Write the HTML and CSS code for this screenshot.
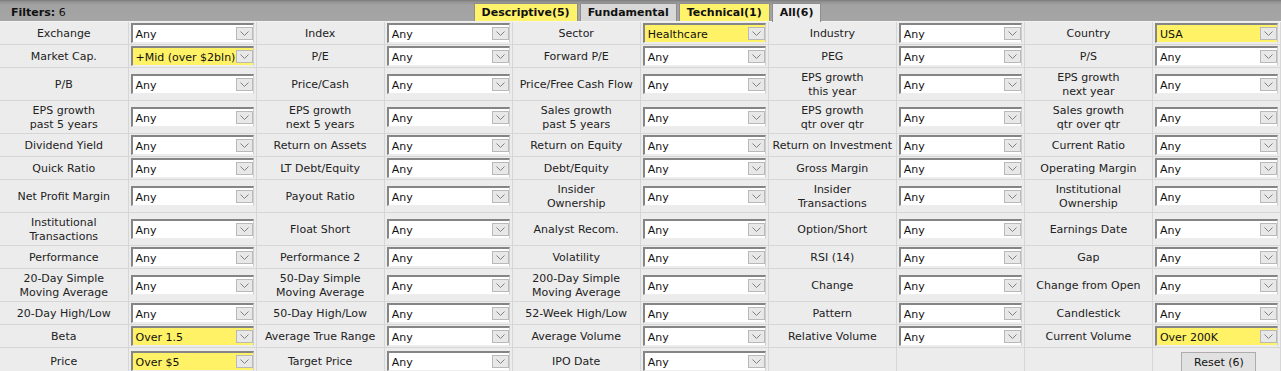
FILE: index.html
```html
<!DOCTYPE html>
<html>
<head>
<meta charset="utf-8">
<link rel="stylesheet" href="styles.css">
</head>
<body>
<div class="bar">
  <div class="title"><b>Filters:</b> 6</div>
  <div class="tabs">
    <span class="tab on">Descriptive(5)</span>
    <span class="tab">Fundamental</span>
    <span class="tab on">Technical(1)</span>
    <span class="tab cur">All(6)</span>
  </div>
  <div></div>
</div>
<table class="grid">
<colgroup><col><col><col><col><col><col><col><col><col><col></colgroup>
<tr>
  <td class="lb">Exchange</td><td class="sc"><div class="sel">Any<i class="arr"></i></div></td>
  <td class="lb">Index</td><td class="sc"><div class="sel">Any<i class="arr"></i></div></td>
  <td class="lb">Sector</td><td class="sc"><div class="sel hl">Healthcare<i class="arr"></i></div></td>
  <td class="lb">Industry</td><td class="sc"><div class="sel">Any<i class="arr"></i></div></td>
  <td class="lb">Country</td><td class="sc"><div class="sel hl">USA<i class="arr"></i></div></td>
</tr>
<tr>
  <td class="lb">Market Cap.</td><td class="sc"><div class="sel hl">+Mid (over $2bln)<i class="arr"></i></div></td>
  <td class="lb">P/E</td><td class="sc"><div class="sel">Any<i class="arr"></i></div></td>
  <td class="lb">Forward P/E</td><td class="sc"><div class="sel">Any<i class="arr"></i></div></td>
  <td class="lb">PEG</td><td class="sc"><div class="sel">Any<i class="arr"></i></div></td>
  <td class="lb">P/S</td><td class="sc"><div class="sel">Any<i class="arr"></i></div></td>
</tr>
<tr>
  <td class="lb">P/B</td><td class="sc"><div class="sel">Any<i class="arr"></i></div></td>
  <td class="lb">Price/Cash</td><td class="sc"><div class="sel">Any<i class="arr"></i></div></td>
  <td class="lb">Price/Free Cash Flow</td><td class="sc"><div class="sel">Any<i class="arr"></i></div></td>
  <td class="lb">EPS growth<br>this year</td><td class="sc"><div class="sel">Any<i class="arr"></i></div></td>
  <td class="lb">EPS growth<br>next year</td><td class="sc"><div class="sel">Any<i class="arr"></i></div></td>
</tr>
<tr>
  <td class="lb">EPS growth<br>past 5 years</td><td class="sc"><div class="sel">Any<i class="arr"></i></div></td>
  <td class="lb">EPS growth<br>next 5 years</td><td class="sc"><div class="sel">Any<i class="arr"></i></div></td>
  <td class="lb">Sales growth<br>past 5 years</td><td class="sc"><div class="sel">Any<i class="arr"></i></div></td>
  <td class="lb">EPS growth<br>qtr over qtr</td><td class="sc"><div class="sel">Any<i class="arr"></i></div></td>
  <td class="lb">Sales growth<br>qtr over qtr</td><td class="sc"><div class="sel">Any<i class="arr"></i></div></td>
</tr>
<tr>
  <td class="lb">Dividend Yield</td><td class="sc"><div class="sel">Any<i class="arr"></i></div></td>
  <td class="lb">Return on Assets</td><td class="sc"><div class="sel">Any<i class="arr"></i></div></td>
  <td class="lb">Return on Equity</td><td class="sc"><div class="sel">Any<i class="arr"></i></div></td>
  <td class="lb">Return on Investment</td><td class="sc"><div class="sel">Any<i class="arr"></i></div></td>
  <td class="lb">Current Ratio</td><td class="sc"><div class="sel">Any<i class="arr"></i></div></td>
</tr>
<tr>
  <td class="lb">Quick Ratio</td><td class="sc"><div class="sel">Any<i class="arr"></i></div></td>
  <td class="lb">LT Debt/Equity</td><td class="sc"><div class="sel">Any<i class="arr"></i></div></td>
  <td class="lb">Debt/Equity</td><td class="sc"><div class="sel">Any<i class="arr"></i></div></td>
  <td class="lb">Gross Margin</td><td class="sc"><div class="sel">Any<i class="arr"></i></div></td>
  <td class="lb">Operating Margin</td><td class="sc"><div class="sel">Any<i class="arr"></i></div></td>
</tr>
<tr>
  <td class="lb">Net Profit Margin</td><td class="sc"><div class="sel">Any<i class="arr"></i></div></td>
  <td class="lb">Payout Ratio</td><td class="sc"><div class="sel">Any<i class="arr"></i></div></td>
  <td class="lb">Insider<br>Ownership</td><td class="sc"><div class="sel">Any<i class="arr"></i></div></td>
  <td class="lb">Insider<br>Transactions</td><td class="sc"><div class="sel">Any<i class="arr"></i></div></td>
  <td class="lb">Institutional<br>Ownership</td><td class="sc"><div class="sel">Any<i class="arr"></i></div></td>
</tr>
<tr>
  <td class="lb">Institutional<br>Transactions</td><td class="sc"><div class="sel">Any<i class="arr"></i></div></td>
  <td class="lb">Float Short</td><td class="sc"><div class="sel">Any<i class="arr"></i></div></td>
  <td class="lb">Analyst Recom.</td><td class="sc"><div class="sel">Any<i class="arr"></i></div></td>
  <td class="lb">Option/Short</td><td class="sc"><div class="sel">Any<i class="arr"></i></div></td>
  <td class="lb">Earnings Date</td><td class="sc"><div class="sel">Any<i class="arr"></i></div></td>
</tr>
<tr>
  <td class="lb">Performance</td><td class="sc"><div class="sel">Any<i class="arr"></i></div></td>
  <td class="lb">Performance 2</td><td class="sc"><div class="sel">Any<i class="arr"></i></div></td>
  <td class="lb">Volatility</td><td class="sc"><div class="sel">Any<i class="arr"></i></div></td>
  <td class="lb">RSI (14)</td><td class="sc"><div class="sel">Any<i class="arr"></i></div></td>
  <td class="lb">Gap</td><td class="sc"><div class="sel">Any<i class="arr"></i></div></td>
</tr>
<tr>
  <td class="lb">20-Day Simple<br>Moving Average</td><td class="sc"><div class="sel">Any<i class="arr"></i></div></td>
  <td class="lb">50-Day Simple<br>Moving Average</td><td class="sc"><div class="sel">Any<i class="arr"></i></div></td>
  <td class="lb">200-Day Simple<br>Moving Average</td><td class="sc"><div class="sel">Any<i class="arr"></i></div></td>
  <td class="lb">Change</td><td class="sc"><div class="sel">Any<i class="arr"></i></div></td>
  <td class="lb">Change from Open</td><td class="sc"><div class="sel">Any<i class="arr"></i></div></td>
</tr>
<tr>
  <td class="lb">20-Day High/Low</td><td class="sc"><div class="sel">Any<i class="arr"></i></div></td>
  <td class="lb">50-Day High/Low</td><td class="sc"><div class="sel">Any<i class="arr"></i></div></td>
  <td class="lb">52-Week High/Low</td><td class="sc"><div class="sel">Any<i class="arr"></i></div></td>
  <td class="lb">Pattern</td><td class="sc"><div class="sel">Any<i class="arr"></i></div></td>
  <td class="lb">Candlestick</td><td class="sc"><div class="sel">Any<i class="arr"></i></div></td>
</tr>
<tr>
  <td class="lb">Beta</td><td class="sc"><div class="sel hl">Over 1.5<i class="arr"></i></div></td>
  <td class="lb">Average True Range</td><td class="sc"><div class="sel">Any<i class="arr"></i></div></td>
  <td class="lb">Average Volume</td><td class="sc"><div class="sel">Any<i class="arr"></i></div></td>
  <td class="lb">Relative Volume</td><td class="sc"><div class="sel">Any<i class="arr"></i></div></td>
  <td class="lb">Current Volume</td><td class="sc"><div class="sel hl">Over 200K<i class="arr"></i></div></td>
</tr>
<tr>
  <td class="lb">Price</td><td class="sc"><div class="sel hl">Over $5<i class="arr"></i></div></td>
  <td class="lb">Target Price</td><td class="sc"><div class="sel">Any<i class="arr"></i></div></td>
  <td class="lb">IPO Date</td><td class="sc"><div class="sel">Any<i class="arr"></i></div></td>
  <td class="lb"></td><td class="sc"></td>
  <td class="lb"></td><td class="sc btncell"><button class="reset">Reset (6)</button></td>
</tr>
</table>
</body>
</html>
```
FILE: styles.css
```css
html, body {
  margin: 0;
  padding: 0;
  background: #ececec;
}
body {
  font-family: "DejaVu Sans", Verdana, sans-serif;
  font-size: 11px;
  color: #222;
}
.bar {
  display: grid;
  grid-template-columns: 1fr auto 1fr;
  align-items: end;
  height: 22px;
  box-sizing: border-box;
  background: linear-gradient(#7a7a7a 0, #939393 2px, #a2a2a2 5px, #a5a5a5 100%);
  border-bottom: 1px solid #f2f2f2;
}
.title {
  align-self: start;
  padding-left: 11px;
  padding-top: 6px;
  line-height: 14px;
  color: #111;
  font-size: 11px;
}
.title b { font-weight: bold; }
.tabs {
  display: flex;
  gap: 2px;
  margin-left: 14px;
}
.tab {
  display: block;
  height: 18px;
  box-sizing: border-box;
  padding: 1px 7px 0;
  line-height: 16px;
  font-weight: bold;
  font-size: 11px;
  color: #111;
  background: #d8d8d8;
  border: 1px solid #8e8e8e;
  border-bottom: none;
}
.tab.on { background: #fff36b; }
.tab.cur { background: #ececec; height: 19px; margin-bottom: -1px; }
.grid {
  width: 1281px;
  table-layout: fixed;
  border-collapse: collapse;
  background: #ececec;
}
.grid td {
  border: 1px solid #d6d6d6;
  padding: 1px 1px;
  vertical-align: middle;
  line-height: 14px;
}
.grid tr:first-child td { border-top: none; }
.grid td:first-child { border-left: none; }
.grid td.lb {
  text-align: center;
  white-space: nowrap;
  overflow: hidden;
  padding: 3px 1px 1px;
}
.grid td.sc { padding-left: 2px; }
.sel {
  position: relative;
  width: 123px;
  height: 20px;
  box-sizing: border-box;
  background: #fff;
  border-top: 2px solid #858585;
  border-left: 2px solid #858585;
  border-right: 1px solid #cfcfcf;
  border-bottom: 1px solid #ededed;
  padding-left: 3px;
  line-height: 20px;
  white-space: nowrap;
  overflow: hidden;
  color: #111;
}
.sel.hl { background: #fff266; }
.arr {
  position: absolute;
  right: 0;
  top: 2px;
  height: 13px;
  width: 17px;
  box-sizing: border-box;
  background: #e8e8e8 url("data:image/svg+xml;utf8,<svg xmlns='http://www.w3.org/2000/svg' width='9' height='5'><polyline points='0.5,0.5 4.5,4.5 8.5,0.5' fill='none' stroke='%23808080' stroke-width='1'/></svg>") no-repeat center;
  border: 1px solid #b9b9b9;
}
.grid td.btncell { text-align: center; vertical-align: top; }
.reset {
  font-family: "DejaVu Sans", Verdana, sans-serif;
  font-size: 11px;
  color: #111;
  width: 75px;
  height: 21px;
  margin-top: 3px;
  margin-left: 4px;
  padding: 0;
  background: #e1e1e1;
  border: 1px solid #adadad;
}
```
